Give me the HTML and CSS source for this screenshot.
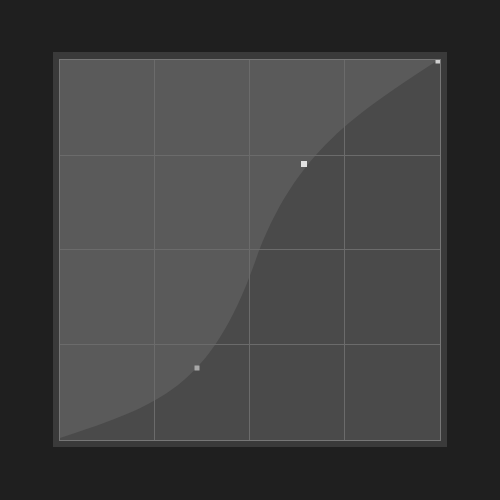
FILE: index.html
```html
<!DOCTYPE html>
<html>
<head>
<meta charset="utf-8">
<link rel="stylesheet" href="styles.css">
</head>
<body>
<div class="panel">
  <div class="plot">
    <svg class="curve" width="380" height="380" viewBox="0 0 380 380">
      <rect x="0" y="0" width="380" height="380" fill="#5a5a5a"/>
      <path d="M0 378 C100 345 150 328 195 202 C235 90 298 53 378 0 L380 0 L380 380 L0 380 Z" fill="#4a4a4a"/>
      <g stroke="#6b6b6b" stroke-width="1">
        <line x1="94.5" y1="0" x2="94.5" y2="380"/>
        <line x1="189.5" y1="0" x2="189.5" y2="380"/>
        <line x1="284.5" y1="0" x2="284.5" y2="380"/>
        <line x1="0" y1="95.5" x2="380" y2="95.5"/>
        <line x1="0" y1="189.5" x2="380" y2="189.5"/>
        <line x1="0" y1="284.5" x2="380" y2="284.5"/>
      </g>
      <rect x="241" y="101" width="6" height="6" fill="#e2e2e2"/>
      <rect x="134.5" y="305.5" width="5" height="5" fill="#a8a8a8"/>
      <rect x="375.5" y="-1.5" width="5" height="5" fill="#d0d0d0"/>
    </svg>
  </div>
</div>
</body>
</html>
```

FILE: styles.css
```css
html, body {
  margin: 0;
  padding: 0;
  background: #1f1f1f;
  width: 500px;
  height: 500px;
}
body {
  padding: 52px 0 0 53px;
  box-sizing: border-box;
}
.panel {
  width: 394px;
  height: 395px;
  box-sizing: border-box;
  background: #3a3a3a;
  padding: 7px 7px 6px 6px;
}
.plot {
  width: 382px;
  height: 382px;
  box-sizing: border-box;
  border: 1px solid #767676;
  background: #5a5a5a;
}
.curve {
  display: block;
}
```
